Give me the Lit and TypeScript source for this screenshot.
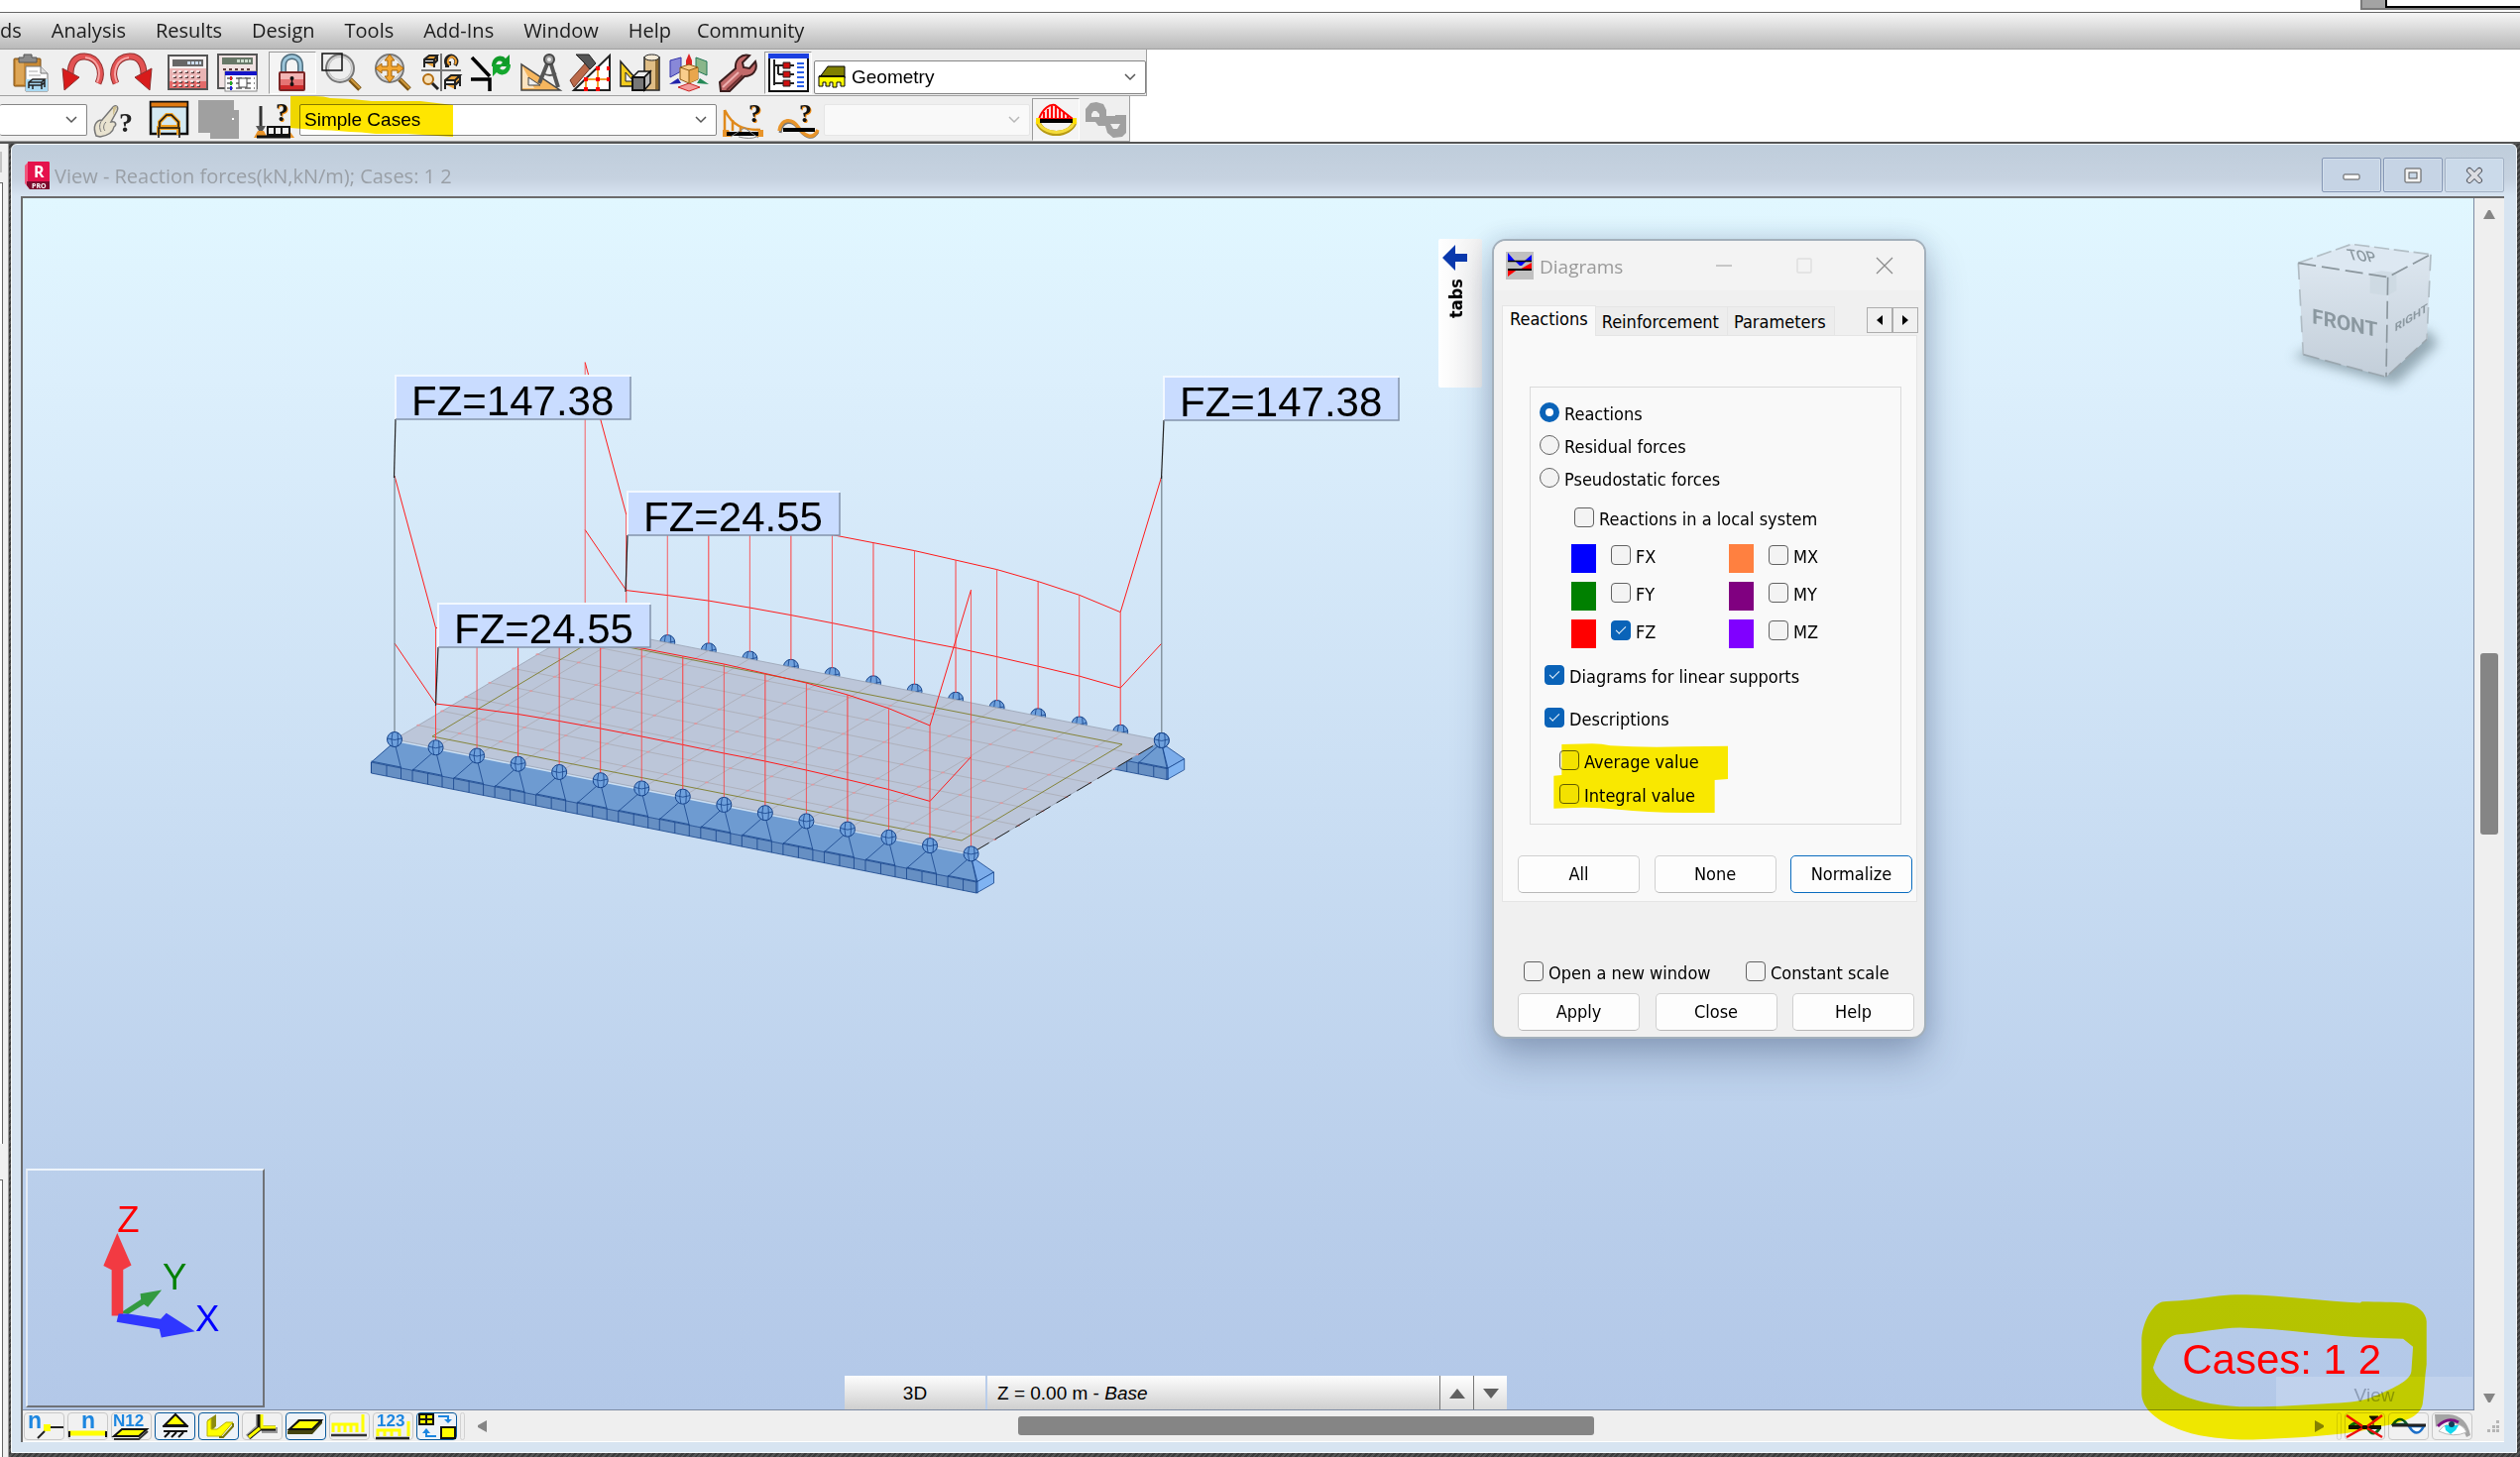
import { LitElement, html, svg, css } from "lit";
import { customElement } from "lit/decorators.js";

/* ---------- toolbar icons ---------- */

const q = (x: number, y: number) =>
  svg`<text x=${x + 1} y=${y + 1} font-family="Liberation Serif, serif" font-weight="700" font-size="26" fill="#f08c10">?</text>
      <text x=${x} y=${y} font-family="Liberation Serif, serif" font-weight="700" font-size="26" fill="#111">?</text>`;

const lens = svg`
  <path d="M28 26l10 10" stroke="#7a5414" stroke-width="5"/>
  <path d="M29 26l9 9" stroke="#d09a3c" stroke-width="2"/>
  <circle cx="18" cy="15" r="14" fill="#dcdcdc" stroke="#777" stroke-width="2"/>
  <circle cx="18" cy="15" r="11.500" fill="#eee" stroke="#bbb"/>`;

const ICONS: Record<string, unknown> = {
  paste: svg`
    <rect x="1" y="5" width="27" height="28" rx="1" fill="#c98a35" stroke="#7a4c12"/>
    <path d="M3 7h8v24H3z" fill="#dda657"/>
    <path d="M6 9V4h5V1h8v3h5v5z" fill="#8a8a8a" stroke="#555"/>
    <path d="M13 13h15l7 7v18H13z" fill="#fff" stroke="#777"/>
    <path d="M28 13v7h7" fill="#ddd" stroke="#777"/>
    <path d="M16 18h9M16 22h12" stroke="#aaa"/>
    <path d="M13 26h22v12H13z" fill="#a9d9f2"/>
    <path d="M16 35v-6l4-3h12l-3 3H16m0 3h13v4M29 29v3l3-3v-3m0 3v5M20 32v4" fill="none" stroke="#222" stroke-width="1.500"/>`,
  undo: svg`
    <path d="M36 30c6-12 0-26-13-27C13 2 8 10 8 21" fill="none" stroke="#8f2f2f" stroke-width="7"/>
    <path d="M36 30c6-12 0-26-13-27C13 2 8 10 8 21" fill="none" stroke="#e25252" stroke-width="5"/>
    <path d="M35 29c5-12 0-24-12-25" fill="none" stroke="#f6a5a5" stroke-width="2"/>
    <path d="M0 15l17 9L2 37z" fill="#d81b1b" stroke="#8f2f2f"/>`,
  redo: svg`
    <path d="M4 30C-2 18 4 4 17 3c10-1 15 7 15 18" fill="none" stroke="#8f2f2f" stroke-width="7"/>
    <path d="M4 30C-2 18 4 4 17 3c10-1 15 7 15 18" fill="none" stroke="#e25252" stroke-width="5"/>
    <path d="M5 29C0 18 5 5 17 4" fill="none" stroke="#f6a5a5" stroke-width="2"/>
    <path d="M40 15l-17 9 15 13z" fill="#d81b1b" stroke="#8f2f2f"/>`,
  calc: svg`
    <rect x="1" y="2" width="39" height="34" fill="#e9b4b4" stroke="#555" stroke-width="2"/>
    <path d="M2 3h37v12H2z" fill="#f4f0f0"/><path d="M2 28h37v7H2z" fill="#e36b6a"/>
    <rect x="5" y="6" width="31" height="7" fill="#666"/><path d="M20 9.500h14" stroke="#cde" stroke-width="3" stroke-dasharray="3 1"/>
    <path d="M6 19h28M6 24h28M6 29h28M6 33h28" stroke="#5c3c3c" stroke-width="2" stroke-dasharray="3 3"/>
    <path d="M5 18h28M5 23h28M5 28h28M5 32h28" stroke="#fff" stroke-width="1.500" stroke-dasharray="3 3"/>`,
  calc2: svg`
    <rect x="1" y="1" width="39" height="34" fill="#f0e2e2" stroke="#555" stroke-width="2"/>
    <rect x="5" y="4" width="31" height="7" fill="#687868"/><path d="M20 7.500h14" stroke="#cdc" stroke-width="3" stroke-dasharray="3 1"/>
    <path d="M6 16h28" stroke="#5c3c3c" stroke-width="2" stroke-dasharray="3 3"/>
    <rect x="8" y="18" width="32" height="20" fill="#fff" stroke="#888"/>
    <rect x="8" y="18" width="32" height="4" fill="#1414c8"/>
    <path d="M10 25h28M10 30h28M10 35h28" stroke="#888" stroke-width="2" stroke-dasharray="6 3"/>
    <path d="M14 23v4" stroke="#d22" stroke-width="2"/><path d="M14 28v4" stroke="#2a2" stroke-width="2"/><path d="M14 33v4" stroke="#22d" stroke-width="2"/>
    <rect x="22" y="25" width="8" height="9" fill="#fff" stroke="#444"/>`,
  lock: svg`
    <path d="M11 21V12c0-12 17-12 17 0v9" fill="none" stroke="#4e6c7c" stroke-width="6"/>
    <path d="M11 21V12c0-12 17-12 17 0v9" fill="none" stroke="#9cc6da" stroke-width="3"/>
    <rect x="7" y="19" width="25" height="18" rx="1" fill="#e57373" stroke="#7b2525" stroke-width="2"/>
    <path d="M8 20h23v6H8z" fill="#f3b5b5"/><path d="M8 32h23v4H8z" fill="#cf2b2b"/>
    <circle cx="19.500" cy="25" r="2" fill="#111"/><circle cx="19.500" cy="31" r="2" fill="#111"/><path d="M19.500 25v6" stroke="#111" stroke-width="1.500"/>`,
  zoom: svg`${lens}<rect x="0" y="0" width="20" height="17" fill="none" stroke="#111" stroke-width="1.500"/>`,
  zoomAll: svg`${lens}<path d="M18 1l5 6h-3v6h6v-3l6 5-6 5v-3h-6v6h3l-5 6-5-6h3v-6h-6v3l-6-5 6-5v3h6V7h-3z" fill="#f3a630" stroke="#a56308"/>`,
  views: svg`
    <path d="M20 0v38M0 17h40" stroke="#777" stroke-width="2"/>
    <path d="M3 14V6l5-4h8l-3 4H3m0 3h10v5M13 6v4l3-3V2" fill="#e8a33c" stroke="#222" stroke-width="2"/>
    <path d="M34 12c4-6-2-11-6-9s-4 8 0 9h-4m4 0V8" fill="none" stroke="#222" stroke-width="4"/>
    <path d="M34 11c3-5-2-9-5-7s-3 6 0 7" fill="none" stroke="#f0a030" stroke-width="2"/>
    <circle cx="7" cy="26" r="5" fill="#f7dfb5" stroke="#b36d10" stroke-width="2"/><path d="M11 30l6 6" stroke="#222" stroke-width="3"/>
    <path d="M24 36v-9l6-5h9l-5 5H24m0 4h10v5M34 27v5l5-5v-5m0 5v6" fill="#e8a33c" stroke="#222" stroke-width="2"/>`,
  corner: svg`
    <path d="M1 4l18 19M0 26h19v12" fill="none" stroke="#000" stroke-width="3.500"/>
    <path d="M21 13C21 3 30 0 35 5l4-4v12H28l4-4c-3-3-7-1-7 4z" fill="#109a28"/>
    <path d="M40 11c0 10-9 13-14 8l-4 4V11h11l-4 4c3 3 7 1 7-4z" fill="#14a82e"/>`,
  compass: svg`
    <path d="M1 11v26h39z" fill="#f6b65e" stroke="#444" stroke-width="1.500"/><path d="M2 13l12 22H2z" fill="#fbe3c0"/>
    <path d="M8 24v8h12z" fill="#efefef" stroke="#444"/>
    <path d="M28 8l-9 22M30 8l8 26" stroke="#555" stroke-width="4"/><path d="M23 20q7 4 13 0" fill="none" stroke="#555" stroke-width="2"/>
    <circle cx="29" cy="6" r="5" fill="#999" stroke="#444" stroke-width="2"/><circle cx="29" cy="6" r="2" fill="#eee"/>`,
  hammer: svg`
    <path d="M4 37L40 2v35z" fill="#fff" stroke="#222" stroke-width="2"/>
    <path d="M16 26h23M28 15v22M16 26v11" stroke="#f0a030" stroke-width="2"/>
    <path d="M0 27L17 8l5 5L4 34z" fill="#bb6a4a" stroke="#6e3320"/>
    <path d="M6 1h13l7 9-6 6-5-6z" fill="#555" stroke="#222"/>
    <path d="M14 24h4v4h-4zM26 13h4v4h-4zM37 13h3v4h-3zM26 24h4v4h-4zM37 24h3v4h-3zM14 34h4v4h-4zM26 34h4v4h-4z" fill="#f00"/>`,
  shapes: svg`
    <path d="M1 8v25h22z" fill="#f2cb1d" stroke="#222" stroke-width="1.500"/><path d="M6 19v9h8z" fill="#efefef" stroke="#222"/>
    <path d="M25 4v33h15V4z" fill="#dfbd85" stroke="#222" stroke-width="1.500"/><path d="M36 5v31h3V5z" fill="#8c6a32"/>
    <ellipse cx="32.500" cy="4" rx="7.500" ry="3" fill="#f4ead6" stroke="#222"/>
    <path d="M13 24l6-6h12l-6 6z" fill="#eee" stroke="#111" stroke-width="1.500"/><path d="M25 24l6-6v12l-6 7z" fill="#bbb" stroke="#111" stroke-width="1.500"/>
    <rect x="13" y="24" width="12" height="13" fill="#777" stroke="#111" stroke-width="2"/>`,
  cube: svg`
    <path d="M1 7l11-3v14L1 24z" fill="#8888d8" stroke="#33a"/><path d="M27 4l11 4v14l-11-5z" fill="#8ab68a" stroke="#275"/>
    <path d="M9 34l11-4 11 4-11 4z" fill="#f29a9a" stroke="#c22"/>
    <path d="M17 7l3-7 3 7v7h-6z" fill="#d22"/><path d="M0 31l9-6 3 5z" fill="#22a"/><path d="M40 31l-9-6-3 5z" fill="#285"/>
    <path d="M11 14l9-3 9 3v12l-9 4-9-4z" fill="#f9cd8c" stroke="#8b5a14"/><path d="M20 17l9-3v12l-9 4z" fill="#e9a64c"/>
    <path d="M11 14l9 3 9-3M20 17v13" fill="none" stroke="#8b5a14"/>`,
  wrench: svg`
    <path d="M2 38l-1-9 16-14C16 6 23 0 31 2l-7 7 1 5 6 1 6-7c3 9-3 15-11 15L11 38z" fill="#c26a6a" stroke="#3a1d1d" stroke-width="2"/>
    <path d="M4 34l16-15" stroke="#eeb0b0" stroke-width="2"/><path d="M8 37l16-15" stroke="#6d2f2f" stroke-width="2"/>`,
  form: svg`
    <rect x="1" y="1" width="39" height="37" fill="#fff" stroke="#111" stroke-width="2"/>
    <rect x="0" y="0" width="41" height="5" fill="#1b3fe0"/>
    <path d="M6 6v26M6 12h20M10 21h16M6 30h20M10 12v9" fill="none" stroke="#222" stroke-width="2"/>
    <path d="M15 9h7v6h-7zM15 18h7v6h-7zM15 27h7v6h-7z" fill="#d01010" stroke="#222"/>
    <path d="M29 10h7M29 14h7M29 19h7M29 24h7M29 29h7M29 33h7" stroke="#2a5fe8" stroke-width="2"/>`,
  hand: svg`
    <path d="M3 36C-1 26 3 20 9 20L20 7c3-3 6 0 4 4l-6 11c5-1 6 3 3 5-1 6-8 9-14 10z" fill="#e9e3d0" stroke="#777" stroke-width="1.500"/>
    <path d="M9 20c-3 4-3 8-1 12M13 22c-3 3-3 7-1 9" fill="none" stroke="#777"/><path d="M20 7l4-1-4 10z" fill="#cfc090"/>
    <text x="26" y="32" font-family="Liberation Serif, serif" font-weight="700" font-size="28" fill="#222">?</text>`,
  house: svg`
    <rect x="2" y="2" width="37" height="32" fill="#d3e9f2" stroke="#111" stroke-width="2.500"/>
    <rect x="2" y="2" width="37" height="5" fill="#e07a10" stroke="#111"/>
    <path d="M11 27v-5l7-7h5l7 7v5zM10 35v-7h20v7" fill="none" stroke="#f0a020" stroke-width="4"/>
    <path d="M10 38V28h21v10M11 27v-5l7-7h5l7 7v5" fill="none" stroke="#111" stroke-width="1.500"/>`,
  copy: svg`<path d="M0 0h36v10h5v29H12v-6H0z" fill="#a0a0a0"/><path d="M34 18h2v2h-2z" fill="#fff"/>`,
  loadQ: svg`
    <path d="M7 6v25" stroke="#333" stroke-width="3"/><path d="M2 26h10l-5 8z" fill="#555"/>
    <path d="M0 38l4-7h6l4 7zM32 38l4-7 5 7z" fill="#e8942a"/>
    <path d="M3 37h34" stroke="#111" stroke-width="3"/><path d="M14 27h22v8H14zM21 27v8M28 27v8" fill="none" stroke="#111" stroke-width="2"/>
    ${q(22, 21)}`,
  curveQ: svg`
    <path d="M2 10c8 16 18 20 36 20M2 10v22M10 20v11M18 26v6" fill="none" stroke="#e08a1c" stroke-width="2.500"/>
    <path d="M0 30h6l3 7H0zM36 30h5v7h-7z" fill="#e8942a"/><path d="M4 34h32" stroke="#000" stroke-width="4"/>
    <path d="M8 37l14-9 14 10M16 37q12 3 18 0" fill="none" stroke="#888"/>${q(26, 22)}`,
  waveQ: svg`
    <path d="M2 33C4 20 14 20 20 28s14 14 20 4" fill="none" stroke="#777" stroke-width="3"/>
    <path d="M1 31C3 18 14 18 20 27s15 14 20 3" fill="none" stroke="#e8942a" stroke-width="3.500"/>
    <path d="M5 30h32" stroke="#000" stroke-width="4"/>${q(21, 22)}`,
  diagram: svg`
    <path d="M2 22a19 15 0 0 0 37 0" fill="none" stroke="#b79a14" stroke-width="5"/>
    <path d="M2 21a19 15 0 0 0 37 0" fill="none" stroke="#f5dc3c" stroke-width="3"/>
    <path d="M3 19C7 8 14 4 19 5l18 14z" fill="#ffd9d9" stroke="#f00" stroke-width="2"/>
    <path d="M8 12v7M12 9v10M16 6v13M20 6v13M24 9v10M28 12v7M32 15v4" stroke="#f00" stroke-width="2"/>
    <path d="M4 21h33" stroke="#000" stroke-width="4"/><path d="M0 18h4v6H0zM37 18h4v6h-4z" fill="#fd0"/>`,
  wave: svg`<path fill-rule="evenodd" d="M0 20V7l5-6 6-1 7 2 3 6v6h9v-1h11v18l-4 4-9 1-6-5-2-7h-7l-3-4H0zM6 15h8v-3l-3-3H8l-2 3zM25 22h10l-3 5h-4z" transform="translate(0 2)" fill="#a0a0a0"/>`,
};

const icon = (name: string) =>
  html`<svg class="icon" viewBox="0 0 41 39" width="41" height="39" aria-hidden="true">${ICONS[name]}</svg>`;

const tool = (name: string, pressed = false) =>
  html`<button class="tool ${pressed ? "pressed" : ""}" aria-label=${name}>${icon(name)}</button>`;

const chevron = html`<svg class="chevron" viewBox="0 0 12 8" width="12" height="8" aria-hidden="true"><path d="M1 1l5 5 5-5" fill="none" stroke="#555" stroke-width="1.500"/></svg>`;

/* ---------- buttons of the strip below the view ---------- */

const blueText = (t: string, x: number, y: number, size: number) =>
  svg`<text x=${x} y=${y} font-family="Liberation Sans, sans-serif" font-weight="700" font-size=${size} fill="#1c86e0">${t}</text>`;

const STRIP: { label: string; on?: boolean; art: unknown }[] = [
  { label: "Node numbers", art: svg`${blueText("n", 3, 15, 23)}<path d="M19 11h7v7h-7z" fill="#ff0"/><path d="M26 14h13M20 18l-7 7" stroke="#222" stroke-width="2"/>` },
  { label: "Bar numbers", art: svg`${blueText("n", 13, 15, 23)}<path d="M0 20h38" stroke="#ff0" stroke-width="5"/><path d="M1 18v6M38 18v6" stroke="#111" stroke-width="2"/>` },
  { label: "Panel numbers", art: svg`${blueText("N12", 1, 13, 17)}<path d="M2 23l8-7h25l-8 7z" fill="#ff0" stroke="#111" stroke-width="2"/><path d="M2 26h25l9-8" fill="none" stroke="#333" stroke-width="2"/>` },
  { label: "Supports", on: true, art: svg`<path d="M20 1l11 11H9z" fill="#ff0" stroke="#111" stroke-width="2"/><path d="M7 13h26M8 18h24" stroke="#111" stroke-width="2"/><path d="M14 19l-5 5M21 19l-5 5M28 19l-5 5" stroke="#111" stroke-width="2"/>` },
  { label: "Sections", on: true, art: svg`<path d="M8 7l9-6v12l-9 9z" fill="#8c8c10"/><path d="M8 8l4-3v11h6l9-7h7L22 23H8z" fill="#ff0" stroke="#b8b000"/><path d="M34 10v3L24 24h-4" fill="none" stroke="#77770a" stroke-width="2"/>` },
  { label: "Local systems", art: svg`<path d="M16 1v13L5 24M19 17h16" fill="none" stroke="#999" stroke-width="6"/><path d="M17 1v14h16M17 15L6 24" fill="none" stroke="#111" stroke-width="5"/><path d="M19 1v13h14M17 15L6 24" fill="none" stroke="#ff0" stroke-width="3"/>` },
  { label: "Panels", on: true, art: svg`<path d="M1 18L12 6h24v4L26 21H1z" fill="#444410"/><path d="M3 16l10-9h22l-9 9z" fill="#ff0" stroke="#111" stroke-width="2"/>` },
  { label: "Loads", art: svg`<path d="M1 22h36" stroke="#333" stroke-width="2.500"/><path d="M3 19v-8h24v8M9 11v8M15 11v8M21 11v8M33 1v18" fill="none" stroke="#ff0" stroke-width="3"/>` },
  { label: "Load values", art: svg`${blueText("123", 3, 13, 17)}<path d="M2 25h34" stroke="#222" stroke-width="2.500"/><path d="M4 23v-6h22v6M11 17v6M18 17v6M35 8v15" fill="none" stroke="#ff0" stroke-width="3"/>` },
  { label: "Attributes", on: true, art: svg`<path d="M2 1h14v10H2z" fill="#ff0" stroke="#111" stroke-width="2"/><path d="M9 1v10M2 6h14" stroke="#111" stroke-width="2"/><path d="M24 14h14v11H24z" fill="#ff0" stroke="#111" stroke-width="2"/><path d="M21 3h10v4" fill="none" stroke="#1c86e0" stroke-width="2"/><path d="M27 6h8l-4 4z" fill="#1c86e0"/><path d="M19 23H9v-4" fill="none" stroke="#1c86e0" stroke-width="2"/><path d="M5 20h8l-4-5z" fill="#1c86e0"/>` },
];

const STRIP_RIGHT: { label: string; art: unknown }[] = [
  { label: "Hide results", art: svg`<path d="M4 14q6-8 13 0M22 14q6 12 13 0" fill="none" stroke="#0a6a1c" stroke-width="3"/><path d="M3 14h33" stroke="#111" stroke-width="4"/><path d="M24 3h9l-4 6zM28 9v5" fill="#111" stroke="#111"/><path d="M1 2l16 11M1 24l16-9M37 2L22 13M37 24L22 15" stroke="#e11" stroke-width="2.500"/>` },
  { label: "Show results", art: svg`<path d="M4 11q7-10 14 0z" fill="#fff" stroke="#0a5a2c" stroke-width="2.500"/><path d="M20 13q8 13 15 0z" fill="#fff" stroke="#1c6fc8" stroke-width="2.500"/><path d="M3 12h34" stroke="#222" stroke-width="3"/>` },
  { label: "Display", art: svg`<path d="M2 1h14q18 1 22 21l-4 2Q28 8 14 8 6 9 3 14z" fill="#a4a4a4"/><path d="M6 18Q14 7 28 12q5 3 6 7-13 6-28-1z" fill="#fff" stroke="#b9b9b9"/><path d="M5 13Q15 3 26 9" fill="none" stroke="#7a1080" stroke-width="3"/><path d="M12 12h14l-3 5-5 4-5-4z" fill="#12d7ee"/><circle cx="19" cy="11" r="3" fill="#143c58"/>` },
];

/* ---------- structural scene ---------- */

const N = 15;
const DX = 41.54;
const DY = 8.24;
const FX0 = 399;
const FY0 = 746;
const REAR: [number, number] = [192.2, -114.4];
const UPPER = [480, 633.5, 635, 638, 642, 647.5, 654, 662, 670, 679.5, 689, 701, 714.7, 732, 595];
const LOWER = [649, 710, 715, 720.5, 727.5, 735, 743, 751.4, 760, 768, 777, 786.6, 796.5, 808.4, 763.6];
const idx = Array.from({ length: N }, (_, i) => i);
const at = (i: number) => [FX0 + i * DX, FY0 + i * DY];
const poly = (ys: number[]) => ys.map((y, i) => `${FX0 + i * DX},${y}`).join(" ");

const ball = (i: number) => {
  const [x, y] = at(i);
  return svg`<g transform="translate(${x} ${y})"><circle r="7.500" fill="#6fa1dd" stroke="#15428a"/><path d="M-7 -1Q0 2 7 -1M-2-7Q-4 0-2 7M3-7Q4 0 3 7" fill="none" stroke="#15428a" stroke-width="0.8"/></g>`;
};

const footing = () => svg`
  <polygon points="375.4,769 399,748 980.5,863 986,890" fill="#6e9bd1"/>
  <polygon points="375.4,769 986,890 986,901 375.4,780" fill="#668fc3" stroke="#15428a" stroke-width="0.8"/>
  <polygon points="980.5,864 1003.5,880 986,890" fill="#7bacea" stroke="#15428a" stroke-width="0.8"/>
  <polygon points="986,890 1003.5,880 1003.5,891 986,901" fill="#7fb3f2" stroke="#15428a" stroke-width="0.8"/>
  ${idx.map((i) => {
    const [x, y] = at(i);
    return svg`<path d="M${x - 4} ${y + 6}L${x - 23.5} ${y + 23}V${y + 34}M${x + 1} ${y + 7}L${x + 6.5} ${y + 29}V${y + 40}M${x - 23.5} ${y + 22}L${x + 6.5} ${y + 28}M${x - 8} ${y + 26}v11" fill="none" stroke="#15428a" stroke-width="0.8"/>`;
  })}`;

const diagrams = (rear: boolean) => svg`
  <polyline points=${poly(UPPER)} fill="none" stroke="#ff1a1a" stroke-width="1"/>
  <polyline points=${poly(LOWER)} fill="none" stroke="#ff1a1a" stroke-width="1"/>
  ${idx.map((i) => {
    const [x, y] = at(i);
    const grey = rear ? i === 14 : i === 0;
    return svg`<path d="M${x} ${UPPER[i]}V${y - 7}" stroke=${grey ? "#74828c" : "#ff3c3c"} stroke-width=${grey ? 1.5 : 1} opacity=${i % 2 && !grey ? 1 : 0.8}/>`;
  })}`;

const grid = () => {
  const along = Array.from({ length: 7 }, (_, k) => (k + 1) / 8);
  return svg`
    ${along.map((t) => svg`<path d="M${FX0 + REAR[0] * t} ${FY0 + REAR[1] * t}l${DX * 14} ${DY * 14}" stroke="#a9abb4" stroke-width="0.8"/>`)}
    ${idx.slice(1, 14).map((i) => svg`<path d="M${at(i)[0]} ${at(i)[1]}l${REAR[0]} ${REAR[1]}" stroke="#a9abb4" stroke-width="0.8"/>`)}
    ${along.map((t) => idx.map((i) => svg`<ellipse cx=${at(i)[0] + REAR[0] * t} cy=${at(i)[1] + REAR[1] * t} rx="1.800" ry="0.900" fill="#dd9aa2"/>`))}`;
};

const FLAGS = [
  { x: 400, y: 379, w: 237, text: "FZ=147.38", tip: [398.5, 482] },
  { x: 634, y: 496, w: 214, text: "FZ=24.55", tip: [632, 597] },
  { x: 443, y: 609, w: 214, text: "FZ=24.55", tip: [440.5, 712] },
  { x: 1175, y: 380, w: 237, text: "FZ=147.38", tip: [1172.5, 483] },
];

const scene = html`
  <svg class="scene" viewBox="24 200 1400 760" width="1400" height="760" role="img" aria-label="Reaction forces on the slab">
    <g transform="translate(${REAR[0]} ${REAR[1]})">${footing()}${idx.map(ball)}</g>
    <polygon points="399,746 980.5,861 1172.7,747 591,632" fill="#bcc6d9" stroke="#99a2b2" stroke-width="0.8"/>
    ${grid()}
    <path d="M437 743L971 848L1133 751L599 646Z" fill="none" stroke="#84843a"/>
    <path d="M984 859L1170 749" stroke="#222" stroke-dasharray="17 7"/>
    <g transform="translate(${REAR[0]} ${REAR[1]})">${diagrams(true)}${ball(14)}</g>
    ${footing()}${diagrams(false)}${idx.map(ball)}
    ${FLAGS.map(
      (f) => svg`
      <path d="M${f.x} ${f.y + 44}L${f.tip[0]} ${f.tip[1]}" stroke="#222" stroke-width="1.200"/>
      <rect x=${f.x} y=${f.y} width=${f.w} height="44" fill="#c9dcff"/>
      <path d="M${f.x} ${f.y + 44}V${f.y}H${f.x + f.w}" fill="none" stroke="#f2f8ff" stroke-width="2"/>
      <path d="M${f.x} ${f.y + 44}H${f.x + f.w}V${f.y + 1}" fill="none" stroke="#8494ac" stroke-width="1.500"/>
      <text x=${f.x + 16} y=${f.y + 40} font-family="Liberation Sans, Arial, sans-serif" font-size="42" fill="#000">${f.text}</text>`
    )}
  </svg>`;

const viewCube = html`
  <svg class="cube" viewBox="460 330 549 510" width="183" height="170" role="img" aria-label="View cube">
    <defs>
      <linearGradient id="face" x1="0" y1="0" x2="0" y2="1"><stop offset="0" stop-color="#dce6ef"/><stop offset="1" stop-color="#c3ced9"/></linearGradient>
      <filter id="soft" x="-30%" y="-30%" width="160%" height="160%"><feGaussianBlur stdDeviation="18"/></filter>
    </defs>
    <path d="M520 690L560 670L930 610L960 650L830 775Z" fill="#7d929c" opacity="0.75" filter="url(#soft)"/>
    <path d="M536 406L697 349L937 380L807 449Z" fill="#dde8f2"/>
    <path d="M536 406L807 449L802 751L551 683Z" fill="url(#face)"/>
    <path d="M807 449L937 380L925 637L802 751Z" fill="url(#face)"/>
    <path d="M753 438l35-8 45 5v55l-27 15-53-8z" fill="#cbd7e0" opacity="0.7"/>
    <g fill="none" stroke-width="5">
      <path d="M536 406L697 349L937 380" stroke="#b3bfc6" stroke-dasharray="46 14"/>
      <path d="M536 406L551 683M937 380L925 637" stroke="#b0bcc4" stroke-dasharray="50 30"/>
      <path d="M551 683L802 751L925 637" stroke="#9aa6ae" stroke-dasharray="50 18"/>
      <path d="M536 406L807 449L937 380M807 449L802 751" stroke="#8b969d" stroke-dasharray="54 18"/>
    </g>
    <g font-family="Roboto, Liberation Sans, sans-serif" font-weight="700" fill="#8b98a0">
      <text transform="translate(578 588) skewY(12)" font-size="62">FRONT</text>
      <text transform="translate(828 614) skewY(-32)" font-size="34">RIGHT</text>
      <text transform="translate(692 396) rotate(6) skewX(25)" font-size="44" font-weight="500">TOP</text>
    </g>
  </svg>`;

const axes = html`
  <svg viewBox="84 62 714 714" width="237" height="237" role="img" aria-label="Axes">
    <path d="M366 494l62-40-2-18 65-11-42 52-12-8-48 30z" fill="#339a40"/>
    <path d="M339 503V364l-25-13 42-99 43 98-25 13v140z" fill="#f23a42"/>
    <path d="M360 497l30 0 98 16 17-18 87 56-102 19-6-26-130-22z" fill="#2f37ff"/>
    <g font-family="Liberation Sans, Arial, sans-serif" font-size="110">
      <text x="356" y="250" fill="#f00">Z</text><text x="494" y="425" fill="#008000">Y</text><text x="593" y="551" fill="#00f">X</text>
    </g>
  </svg>`;

@customElement("app-root")
export class AppRoot extends LitElement {
  static styles = css`
    :host {
      display: flex;
      flex-direction: column;
      min-height: 100vh;
      background: #fff;
      color: #000;
      font-family: "Liberation Sans", Arial, sans-serif;
      font-size: 19px;
    }
    *, *::before, *::after { box-sizing: border-box; }
    button, select, input { font: inherit; color: inherit; margin: 0; padding: 0; }
    button { background: none; border: 0; }
    svg { display: block; flex: none; overflow: visible; }

    .sliver { display: flex; justify-content: flex-end; height: 12px; }
    .fragment { display: flex; width: 161px; height: 10px; background: #7a7a7a; padding: 0 0 2px 2px; }
    .fragment-grip { width: 23px; background: #a3a3a3; }
    .fragment-box { flex: 1; border: solid #000; border-width: 0 0 2px 2px; background: #fff; }

    .menubar {
      display: flex;
      gap: 30px;
      height: 38px;
      align-items: center;
      border-top: 1px solid #666;
      border-bottom: 1px solid #a0a0a0;
      background: linear-gradient(#f5f5f5, #b9b9b9);
      font-family: "Open Sans", "Noto Sans", sans-serif;
      font-size: 20px;
      line-height: 24px;
      color: #1c1c1c;
    }
    .menubar button:last-child { margin-left: -4px; }

    .toolbar {
      display: flex;
      align-items: center;
      align-self: flex-start;
      background: #efefef;
      border: solid #a0a0a0;
      border-width: 0 1px 1px 0;
    }
    .toolbar-main { width: 1157px; height: 47px; padding-left: 9px; gap: 8px; }
    .toolbar-cases { width: 1140px; height: 46px; padding-top: 2px; gap: 8px; }
    .group { display: flex; align-items: center; gap: 2px; }
    .grow { flex: 1; }
    .tool { display: flex; justify-content: center; align-items: center; width: 48px; height: 43px; border: 1px solid transparent; }
    .pressed { border-color: #9a9a9a #fff #fff #9a9a9a; background: #f4f4f4; }
    .combo { position: relative; display: flex; align-items: center; flex: 1; }
    .combo select {
      appearance: none;
      width: 100%;
      height: 32px;
      padding: 0 32px 0 4px;
      border: 1px solid #858585;
      border-radius: 2px;
      background: #fff;
      opacity: 1;
    }
    .combo .chevron { position: absolute; right: 10px; }
    .combo-geometry { align-self: flex-end; }
    .combo-geometry select { height: 34px; padding-left: 37px; }
    .combo-geometry .glyph { position: absolute; left: 4px; }
    .combo-left { flex: none; width: 88px; }
    .combo-left select { border-left: 0; }
    .combo-cases { flex: none; width: 421px; }
    .combo-off select { border-color: #e6e6e6; background: #f9f9f9; }
    .combo-off .chevron { opacity: 0.4; }
    .mark { position: absolute; mix-blend-mode: multiply; pointer-events: none; }
    .mark-cases { left: -9px; top: -8px; }

    .workspace {
      flex: 1;
      display: flex;
      border-top: 2px solid #555;
      background: repeating-linear-gradient(135deg, #3c3c3c 0 2px, #565656 2px 4px);
    }
    .dock { display: flex; flex-direction: column; width: 9px; background: #f0f0f0; border-right: 1px solid #a0a0a0; }
    .dock-chip { width: 2px; height: 21px; margin: 8px 0 10px; background: #c4c4c4; }
    .dock-pane { flex: 1; margin-right: 5px; border: solid #666; border-width: 1px 1px 0 0; background: #fff; }
    .dock-low { flex: none; height: 280px; margin-top: 36px; }

    .window {
      flex: 1;
      display: flex;
      flex-direction: column;
      margin: 0 3px 4px 2px;
      padding: 0 12px 10px 9px;
      border: 1px solid #f5f9fd;
      border-radius: 6px 6px 0 0;
      background: linear-gradient(#bfcddb, #c6d2e0 34px, #d7e4f1 52px);
    }
    .caption { display: flex; align-items: center; height: 52px; padding-left: 4px; gap: 4px; color: #999fa6; font-family: "Open Sans", "Noto Sans", sans-serif; }
    .caption-text { flex: 1; padding-top: 12px; font-size: 20px; line-height: 24px; }
    .caption .logo { margin-top: 9px; }
    .caption-buttons { display: flex; gap: 2px; align-self: flex-end; margin-bottom: 4px; }
    .caption-buttons button { display: grid; place-items: center; width: 60px; height: 35px; border: 1px solid #8496b4; border-radius: 2px; background: #c6d4e5; box-shadow: inset 0 0 0 1px #d3dfec; }
    .caption-buttons .shut { border-color: #a3b2c5; background: #cbdaea; }

    .client { flex: 1; display: grid; grid-template-columns: 1fr 30px; grid-template-rows: 1fr 32px; border: solid #6b6b6b; border-width: 2px 0 0 2px; background: #efefef; }
    .canvas { position: relative; overflow: hidden; border: solid #7d8ba3; border-width: 0 1px 1px 0; background: linear-gradient(#e1f7ff, #dceffc 15%, #b8cdea 85%, #b3c8e8); }
    .scene { position: absolute; left: 0; top: 0; }
    .cube { position: absolute; right: 19px; top: 40px; }
    .axes { position: absolute; left: 3px; bottom: 2px; border: 2px solid; border-color: #eef4fb #6f7277 #6f7277 #e4ebf4; }
    .cases-label { position: absolute; right: 93px; bottom: 26px; color: #f00; font-size: 42px; line-height: 48px; }
    .view-tag { position: absolute; right: 1px; bottom: 0; width: 198px; height: 33px; background: rgb(255 255 255 / 18%); color: #8b9bb4; line-height: 37px; text-align: center; }
    .mark-ring { right: -42px; bottom: -47px; }
    .canvas-wrap { position: relative; display: grid; }

    .level { position: absolute; left: 829px; bottom: 0; display: flex; width: 668px; height: 34px; background: linear-gradient(#fdfdfd, #cfcfcf); }
    .level button { padding-top: 2px; }
    .level .level-mode { width: 144px; border-right: 2px solid #b9cdea; text-align: center; }
    .level .level-name { flex: 1; padding-left: 10px; text-align: left; }
    .level .level-step { display: grid; place-items: center; width: 34px; border-left: 1px solid #777; background: linear-gradient(#fff, #dcdcdc); }

    .vscroll { display: flex; flex-direction: column; align-items: center; justify-content: space-between; padding: 12px 0 8px; }
    .vthumb { width: 18px; height: 183px; margin: 438px 0 auto; border-radius: 3px; background: #858585; }
    .strip { grid-column: 1 / -1; display: flex; align-items: center; gap: 3px; padding-left: 1px; border-bottom: 1px solid #fff; }
    .strip button { width: 41px; height: 28px; border: 1px solid #c8c8c8; border-radius: 4px; background: #f1f1f1; }
    .strip button.on { border-color: #0a5a9c; background: #eef3f8; }
    .strip .divider { width: 5px; height: 28px; border: 1px solid #d2d2d2; border-radius: 3px; }
    .hscroll { flex: 1; display: flex; align-items: center; padding: 0 10px 0 10px; }
    .hthumb { width: 581px; height: 19px; margin: 0 auto 0 536px; border-radius: 3px; background: #858585; }
    .grip { margin: 0 5px 0 12px; }

    .pin { position: absolute; left: 1428px; top: 41px; display: flex; flex-direction: column; align-items: flex-start; width: 44px; height: 150px; padding: 6px 0 6px 4px; gap: 8px; border-radius: 2px; background: linear-gradient(90deg, #fff, #f1f1f1); font-family: "DejaVu Sans Condensed", "Noto Sans", sans-serif; font-weight: 700; font-size: 18px; line-height: 28px; }
    .pin-text { writing-mode: vertical-rl; transform: rotate(180deg); }

    .dialog {
      position: absolute;
      left: 1482px;
      top: 41px;
      width: 438px;
      display: flex;
      flex-direction: column;
      border: 2px solid #a3b0bb;
      border-radius: 14px;
      background: #f0f0f0;
      box-shadow: 0 20px 40px rgb(30 50 90 / 30%), 0 0 22px rgb(30 50 90 / 14%);
      font-family: "DejaVu Sans Condensed", "Noto Sans", sans-serif;
      font-size: 18px;
      line-height: 20px;
    }
    .dialog-title { display: flex; align-items: center; height: 50px; padding: 0 32px 0 12px; border-radius: 12px 12px 0 0; background: #f3f3f3; color: #999; font-family: "Open Sans", "Noto Sans", sans-serif; }
    .dialog-title h2 { flex: 1; margin: 0; padding: 2px 0 0 6px; font-size: 19px; font-weight: 400; }
    .dialog-title .controls { display: flex; gap: 65px; }
    .tabs { display: flex; align-items: flex-end; height: 45px; padding: 0 6px 0 8px; }
    .tabs button { height: 29px; padding: 2px 8px 0 6px; border: 1px solid #e5e5e5; border-bottom: 0; border-left: 0; background: #ededed; }
    .tabs button.active { z-index: 1; height: 31px; padding: 0 7px 4px; margin-bottom: -1px; border-left: 1px solid #e5e5e5; background: #f9f9f9; }
    .tabs .spin { display: flex; margin: 0 0 2px auto; }
    .tabs .spin button { display: grid; place-items: center; width: 26px; height: 26px; padding: 0; border: 1px solid #adadad; background: #f0f0f0; }
    .panel { margin: 0 7px 0 8px; padding: 51px 4px 8px 15px; border: 1px solid #e5e5e5; background: #f9f9f9; }
    fieldset { position: relative; margin: 0 11px 31px 12px; padding: 15px 0 20px; border: 1px solid #dadada; display: flex; flex-direction: column; align-items: flex-start; min-width: 0; }
    label { display: flex; gap: 5px; height: 20px; align-items: center; white-space: nowrap; }
    label span { padding-top: 3px; }
    .radio { margin: 0 0 13px 9px; }
    .local { margin: 7px 0 17px 44px; }
    .forces { display: grid; grid-template-columns: 25px 104px 25px 80px; column-gap: 15px; row-gap: 9px; margin: 0 0 17px 41px; }
    .forces label { margin-top: 1px; }
    .swatch { height: 29px; background: var(--c); }
    .wide { margin: 0 0 23px 14px; }
    .value { margin: 0 0 14px 29px; }
    .value:last-of-type { margin-bottom: 0; }
    input { appearance: none; flex: none; display: grid; place-items: center; width: 20px; height: 20px; border: 1px solid #626262; border-radius: 4px; background: #f3f3f3; }
    input[type="radio"] { border-radius: 50%; }
    input[type="radio"]:checked { border: 6px solid #0a63b8; background: #fff; }
    input[type="checkbox"]:checked { border-color: #0a63b8; background: #0a63b8; }
    input[type="checkbox"]:checked::after { content: ""; width: 10px; height: 5px; margin-top: -4px; border: solid #e8f2fb; border-width: 0 0 1px 1px; transform: rotate(-45deg); }
    .mark-values { left: 22px; top: 357px; }
    .row { display: grid; grid-template-columns: repeat(3, 123px); justify-content: space-between; }
    .row button { height: 38px; border: 1px solid #d0d0d0; border-bottom-color: #b8b8b8; border-radius: 5px; background: #fdfdfd; }
    .row button.default { border-color: #0a6cbf; }
    .options { display: grid; grid-template-columns: 224px 1fr; margin: 60px 0 11px 30px; }
    .row-foot { margin: 1px 10px 6px 24px; }
  `;

  private check(text: string, cls = "", checked = false) {
    return html`<label class=${cls}><input type="checkbox" .checked=${checked} /><span>${text}</span></label>`;
  }

  private force(color: string, text: string, checked = false) {
    return html`<span class="swatch" style="--c:${color}"></span>${this.check(text, "", checked)}`;
  }

  private dialog() {
    return html`
      <section class="dialog" role="dialog" aria-label="Diagrams">
        <header class="dialog-title">
          <svg viewBox="0 0 28 28" width="28" height="28" aria-hidden="true">
            <path d="M0 0h28v28H0z" fill="#c0c0c0"/><path d="M2 1l7 8h10l7-6v6l-6 1-4 4h-2L9 9H2z" fill="#00f"/><path d="M26 11v6H13L2 25v-6h10z" fill="#f00"/>
            <path d="M2 9.500h24" stroke="#000" stroke-width="1.500"/><path d="M2 18h24" stroke="#000" stroke-width="2"/>
          </svg>
          <h2>Diagrams</h2>
          <div class="controls">
            <button aria-label="Minimize"><svg viewBox="0 0 16 16" width="16" height="16"><path d="M0 8h16" stroke="#999"/></svg></button>
            <button aria-label="Maximize"><svg viewBox="0 0 16 16" width="16" height="16"><rect x="1" y="1" width="14" height="14" rx="1" fill="none" stroke="#e0e0e0" stroke-width="1.500"/></svg></button>
            <button aria-label="Close dialog"><svg viewBox="0 0 16 16" width="16" height="16"><path d="M0 0l16 16M16 0L0 16" stroke="#8a8a8a" stroke-width="1.200"/></svg></button>
          </div>
        </header>
        <nav class="tabs">
          <button class="active">Reactions</button><button>Reinforcement</button><button>Parameters</button>
          <div class="spin">
            <button aria-label="Previous tab"><svg viewBox="0 0 6 10" width="6" height="10"><path d="M6 0v10L0 5z"/></svg></button>
            <button aria-label="Next tab"><svg viewBox="0 0 6 10" width="6" height="10"><path d="M0 0v10l6-5z"/></svg></button>
          </div>
        </nav>
        <div class="panel">
          <fieldset>
            <label class="radio"><input type="radio" name="kind" .checked=${true} /><span>Reactions</span></label>
            <label class="radio"><input type="radio" name="kind" /><span>Residual forces</span></label>
            <label class="radio"><input type="radio" name="kind" /><span>Pseudostatic forces</span></label>
            ${this.check("Reactions in a local system", "local")}
            <div class="forces">
              ${this.force("#0000ff", "FX")}${this.force("#ff8040", "MX")}
              ${this.force("#008000", "FY")}${this.force("#800080", "MY")}
              ${this.force("#ff0000", "FZ", true)}${this.force("#8000ff", "MZ")}
            </div>
            ${this.check("Diagrams for linear supports", "wide", true)}
            ${this.check("Descriptions", "wide", true)}
            ${this.check("Average value", "value")}
            ${this.check("Integral value", "value")}
            <svg class="mark mark-values" viewBox="200 350 540 225" width="180" height="75" aria-hidden="true">
              <path d="M228 359L320 357Q350 357 375 363Q480 370 600 366L731 364V464L691 467V566H600Q480 564 400 556Q330 549 290 550L204 553V454L228 452Z" fill="#ffee00"/>
            </svg>
          </fieldset>
          <div class="row"><button>All</button><button>None</button><button class="default">Normalize</button></div>
        </div>
        <div class="options">${this.check("Open a new window")}${this.check("Constant scale")}</div>
        <div class="row row-foot"><button>Apply</button><button>Close</button><button>Help</button></div>
      </section>`;
  }

  render() {
    const menu = ["ds", "Analysis", "Results", "Design", "Tools", "Add-Ins", "Window", "Help", "Community"];
    return html`
      <div class="sliver"><div class="fragment"><div class="fragment-grip"></div><div class="fragment-box"></div></div></div>
      <nav class="menubar">${menu.map((m) => html`<button>${m}</button>`)}</nav>

      <div class="toolbar toolbar-main">
        <div class="group">${["paste", "undo", "redo"].map((n) => tool(n))}</div>
        <div class="group">${["calc", "calc2"].map((n) => tool(n))}</div>
        <div class="group grow">
          ${tool("lock", true)}
          ${["zoom", "zoomAll", "views", "corner", "compass", "hammer", "shapes", "cube", "wrench"].map((n) => tool(n))}
          ${tool("form", true)}
          <div class="combo combo-geometry">
            <select aria-label="Layout"><option>Geometry</option></select>
            <svg class="glyph" viewBox="0 0 28 23" width="28" height="23" aria-hidden="true">
              <path d="M1 13L10 1h17v12z" fill="#808000" stroke="#000"/><path d="M1 11h26v10h-4v-4h-4v5h-4v-5h-3v4H8v-4H5v4H1z" fill="#ff0" stroke="#000"/><path d="M1 11h26" stroke="#000" stroke-width="1.500"/>
            </svg>
            ${chevron}
          </div>
        </div>
      </div>

      <div class="toolbar toolbar-cases">
        <div class="group">
          <div class="combo combo-left"><select aria-label="Selection"></select>${chevron}</div>
          ${tool("hand")}
        </div>
        <div class="group">${tool("house")}${tool("copy")}</div>
        <div class="group">
          ${tool("loadQ")}
          <div class="combo combo-cases">
            <select aria-label="Case"><option>Simple Cases</option></select>
            <svg class="mark mark-cases" viewBox="0 0 165 42" width="165" height="42" aria-hidden="true">
              <path d="M0 0H24Q34 0 40 2L62 3L82 5H131L164 9V41L118 38L86 38Q70 36 60 36Q40 34 24 34L0 32Z" fill="#ffe600"/>
            </svg>
            ${chevron}
          </div>
          ${tool("curveQ")}
        </div>
        <div class="group grow">
          ${tool("waveQ")}
          <div class="combo combo-off"><select aria-label="Mode" disabled></select>${chevron}</div>
          ${tool("diagram", true)}${tool("wave")}
        </div>
      </div>

      <main class="workspace">
        <aside class="dock"><div class="dock-chip"></div><div class="dock-pane"></div><div class="dock-pane dock-low"></div></aside>
        <section class="window">
          <header class="caption">
            <svg class="logo" viewBox="0 0 26 28" width="26" height="28" aria-hidden="true">
              <path d="M0 4l4-4h20l1 1v27H5l-5-6z" fill="#f0567c"/><path d="M3 0h21l1 1v19H3z" fill="#e5124c"/><path d="M2 20h23v8H5l-3-4z" fill="#7c0a2c"/>
              <text x="9" y="16" font-family="Open Sans, sans-serif" font-weight="700" font-size="16" fill="#fff">R</text>
              <text x="7" y="27" font-family="Open Sans, sans-serif" font-weight="700" font-size="7" fill="#fff">PRO</text>
            </svg>
            <span class="caption-text">View - Reaction forces(kN,kN/m); Cases: 1 2</span>
            <div class="caption-buttons">
              <button aria-label="Minimize view"><svg viewBox="0 0 18 18" width="18" height="18"><rect x="1" y="8" width="16" height="5" rx="1" fill="#fff" stroke="#555"/></svg></button>
              <button aria-label="Maximize view"><svg viewBox="0 0 18 18" width="18" height="18"><rect x="1" y="2" width="16" height="14" rx="1" fill="#f4f4f4" stroke="#555"/><rect x="5" y="6" width="8" height="6" fill="#c9d8e8" stroke="#555"/></svg></button>
              <button class="shut" aria-label="Close view"><svg viewBox="0 0 18 18" width="18" height="18"><path d="M4 4l10 10M14 4L4 14" stroke="#555a64" stroke-width="6" stroke-linecap="round"/><path d="M4 4l10 10M14 4L4 14" stroke="#dcdde2" stroke-width="4" stroke-linecap="round"/></svg></button>
            </div>
          </header>
          <div class="client">
            <div class="canvas-wrap">
              <div class="canvas">
                ${scene}${viewCube}
                <div class="axes">${axes}</div>
                <div class="cases-label">Cases: 1 2</div>
                <div class="view-tag">View</div>
                <div class="level">
                  <button class="level-mode">3D</button>
                  <button class="level-name">Z = 0.00 m - <i>Base</i></button>
                  <button class="level-step" aria-label="Level up"><svg viewBox="0 0 16 10" width="16" height="10"><path d="M0 10L8 0l8 10z" fill="#606060"/></svg></button>
                  <button class="level-step" aria-label="Level down"><svg viewBox="0 0 16 10" width="16" height="10"><path d="M0 0h16l-8 10z" fill="#606060"/></svg></button>
                </div>
                <div class="pin">
                  <svg viewBox="0 0 26 26" width="26" height="26" aria-hidden="true"><path d="M0 13L13 0v9h12v8H13v9z" fill="#0a39ad"/></svg>
                  <span class="pin-text">tabs</span>
                </div>
                ${this.dialog()}
              </div>
              <svg class="mark mark-ring" viewBox="170 70 1147 500" width="382" height="167" aria-hidden="true">
                <path fill-rule="evenodd" fill="#fff700" d="M183 210C188 160 215 110 245 101C280 97 320 97 350 92C400 84 440 78 500 79C620 82 740 99 845 104L850 100C900 101 950 101 980 104C1020 110 1045 135 1046 160V290C1040 330 1040 370 1034 410C1025 450 980 465 900 480C830 500 700 512 520 518C420 520 330 505 280 480C220 455 185 420 183 380ZM218 300C235 250 255 205 290 200C350 196 420 180 480 179C620 182 750 205 880 210L975 213L1005 237L1000 310C998 340 940 365 880 390C840 405 800 407 740 409C660 413 580 420 480 418C400 414 330 400 280 370C240 345 222 320 218 300Z"/>
              </svg>
            </div>
            <div class="vscroll">
              <svg viewBox="0 0 12 9" width="12" height="9"><path d="M0 9l5-9h2l5 9z" fill="#858585"/></svg>
              <div class="vthumb"></div>
              <svg viewBox="0 0 12 9" width="12" height="9"><path d="M0 0l5 9h2l5-9z" fill="#858585"/></svg>
            </div>
            <div class="strip">
              ${STRIP.map((b) => html`<button class=${b.on ? "on" : ""} aria-label=${b.label}><svg viewBox="0 0 39 26" width="39" height="26">${b.art}</svg></button>`)}
              <span class="divider"></span>
              <div class="hscroll">
                <svg viewBox="0 0 9 12" width="9" height="12"><path d="M9 0L0 5v2l9 5z" fill="#858585"/></svg>
                <div class="hthumb"></div>
                <svg viewBox="0 0 9 12" width="9" height="12"><path d="M0 0l9 5v2l-9 5z" fill="#858585"/></svg>
              </div>
              <span class="divider"></span>
              ${STRIP_RIGHT.map((b) => html`<button aria-label=${b.label}><svg viewBox="0 0 39 26" width="39" height="26">${b.art}</svg></button>`)}
              <svg class="grip" viewBox="0 0 12 12" width="12" height="12"><path d="M9 0h3v3H9zM5 5h3v3H5zM9 5h3v3H9zM0 9h3v3H0zM5 9h3v3H5zM9 9h3v3H9z" fill="#b5b5b5"/></svg>
            </div>
          </div>
        </section>
      </main>`;
  }
}
